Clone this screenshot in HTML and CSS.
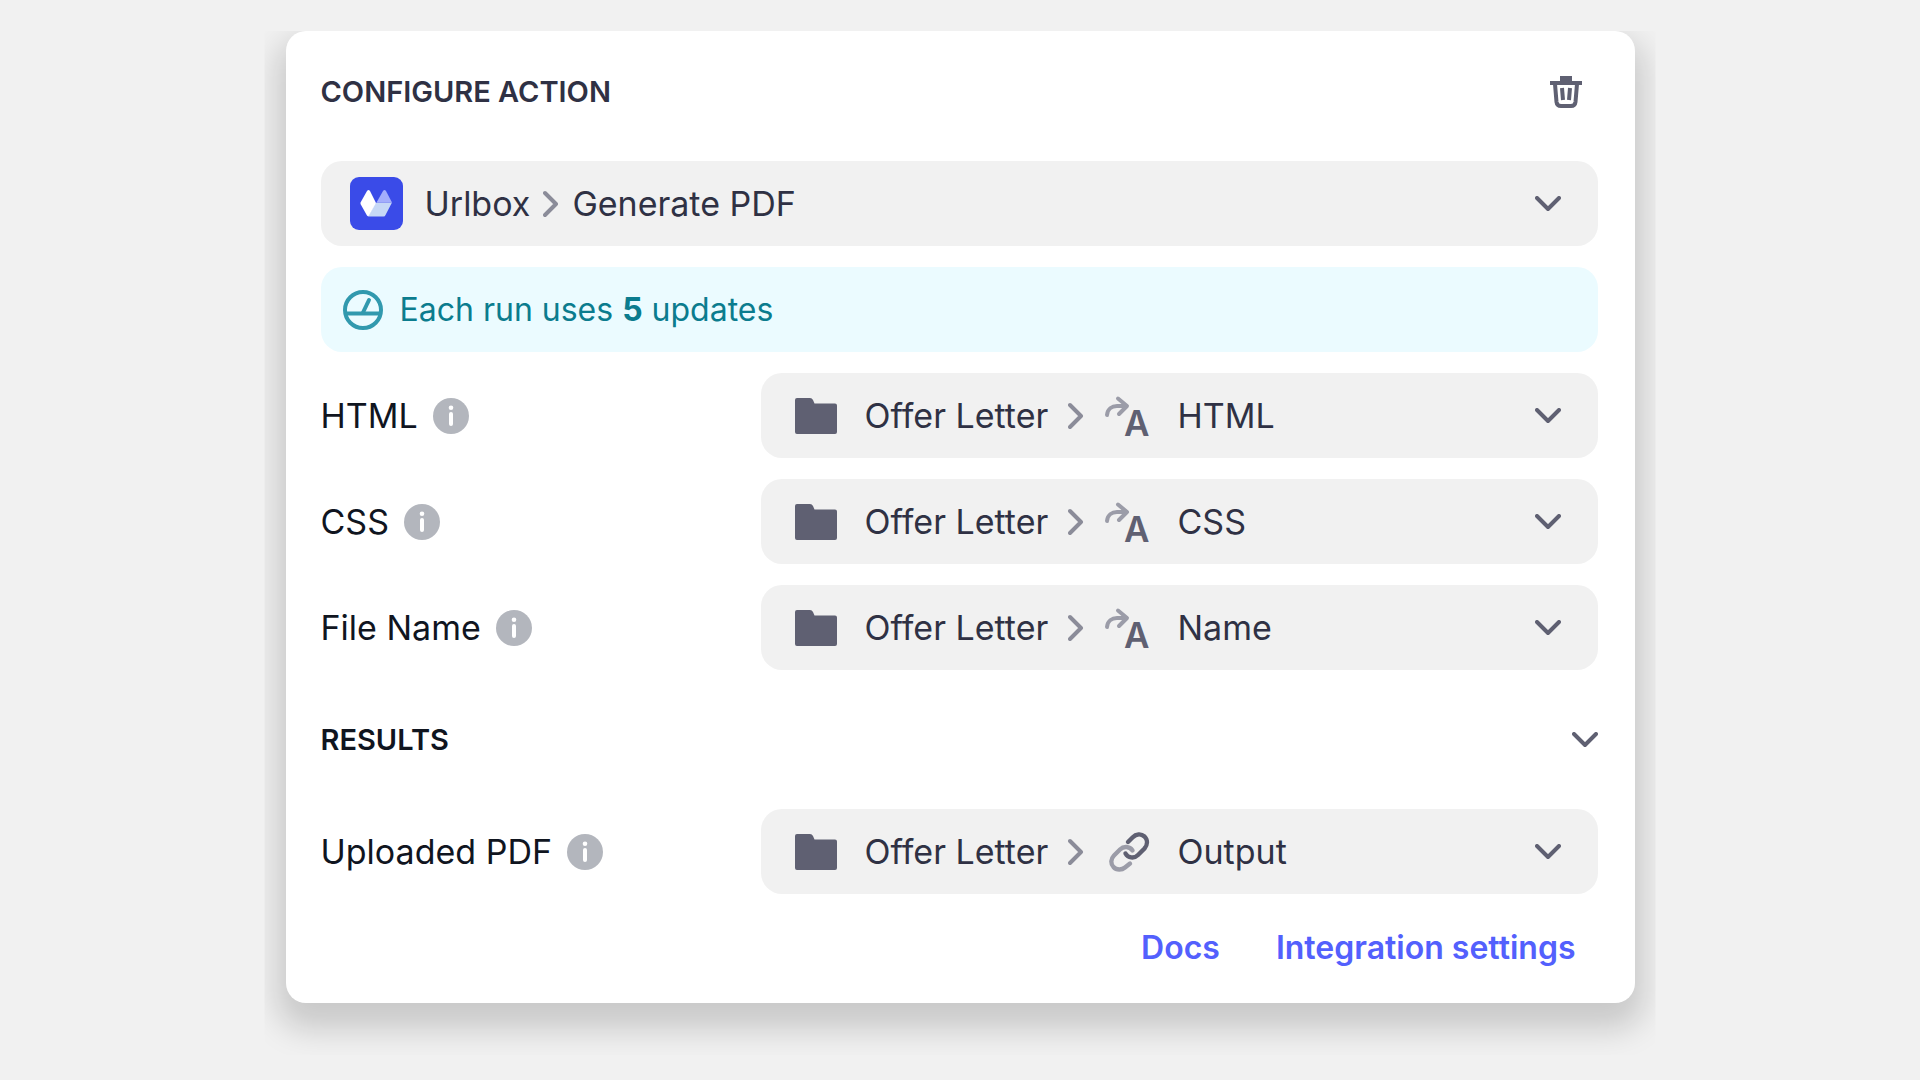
FILE: index.html
```html
<!DOCTYPE html>
<html lang="en">
<head>
<meta charset="utf-8">
<meta name="viewport" content="width=device-width, initial-scale=1">
<title>Configure action</title>
<link rel="stylesheet" href="styles.css">
</head>
<body>
<svg class="sprite" aria-hidden="true">
  <symbol id="caret" viewBox="0 0 26 16"><path d="M2 2 13 13 24 2" fill="none" stroke="currentColor" stroke-width="4" stroke-linecap="round" stroke-linejoin="round"/></symbol>
  <symbol id="crumb" viewBox="0 0 16 28"><path d="M2 3 13 14 2 25" fill="none" stroke="currentColor" stroke-width="4" stroke-linecap="round" stroke-linejoin="round"/></symbol>
  <symbol id="folder" viewBox="0 0 42 36"><path d="M2 0H15Q17 0 18 2L19.500 5.500H40Q42 5.500 42 7.500V34Q42 36 40 36H2Q0 36 0 34V2Q0 0 2 0Z" fill="currentColor"/></symbol>
  <symbol id="info" viewBox="0 0 36 36"><circle cx="18" cy="18" r="18" fill="currentColor"/><circle cx="18" cy="9.800" r="2.300" fill="#fff"/><path d="M18 16V26" stroke="#fff" stroke-width="4" stroke-linecap="round"/></symbol>
  <symbol id="arrow" viewBox="0 0 46 42"><g fill="none" stroke="#9b9ca8" stroke-width="4" stroke-linecap="round" stroke-linejoin="round"><path d="M3 20C3.500 14 8 11 13 11H22"/><path d="M14 3.500 23 11 15 19"/></g></symbol>
</svg>

<main class="card">
  <header class="card-header">
    <h1 class="title">CONFIGURE ACTION</h1>
    <button class="icon-button" type="button" aria-label="Delete action">
      <svg class="trash" viewBox="0 0 32 32" aria-hidden="true"><path d="M10 0H22V5H10ZM0 5H32V9H0Z" fill="#5f6072"/><path d="M5 8 6.500 26Q7 30 11 30H21Q25 30 25.500 26L27 8" fill="none" stroke="#5f6072" stroke-width="4"/><path d="M12 12 13 24M20 12 19 24" stroke="#5f6072" stroke-width="4"/></svg>
    </button>
  </header>

  <form class="form">
    <div class="field action">
      <svg class="logo" viewBox="0 0 53 53" aria-hidden="true"><rect width="53" height="53" rx="9" fill="#3a4be8"/><path d="M18 39.500 25 26.500 27 25.500H42L35.500 38Q35 39.500 33.500 39.500Z" fill="#c6d8f6"/><path d="M26.500 25.500 33 14Q34.500 12 36 14L42 25.500Z" fill="#a4aefc"/><path d="M10.500 25.500 17 14Q18.500 12 20 14L26 26 19 38.500Q18 40 17 38.500L10.500 27Z" fill="#fff"/></svg>
      <label class="source" for="action">Urlbox</label>
      <svg class="crumb" aria-hidden="true"><use href="#crumb"/></svg>
      <select class="select" id="action"><option>Generate PDF</option></select>
      <svg class="caret" aria-hidden="true"><use href="#caret"/></svg>
    </div>

    <p class="notice">
      <svg class="gauge" viewBox="0 0 40 40" aria-hidden="true"><g fill="none" stroke="#3199ae" stroke-width="4"><circle cx="20" cy="20" r="18"/><path d="M2 23.500H38"/><path d="M20 22.500 26 10" stroke-linecap="round"/></g></svg>
      <span>Each run uses <strong>5</strong> updates</span>
    </p>

    <div class="row">
      <div class="label"><label for="html">HTML</label><svg class="info" aria-hidden="true"><use href="#info"/></svg></div>
      <div class="field">
        <svg class="folder" aria-hidden="true"><use href="#folder"/></svg>
        <span class="source">Offer Letter</span>
        <svg class="crumb" aria-hidden="true"><use href="#crumb"/></svg>
        <svg class="type" viewBox="0 0 46 42" aria-hidden="true"><use href="#arrow"/><text class="type-letter" x="20" y="41">A</text></svg>
        <select class="select" id="html"><option>HTML</option></select>
        <svg class="caret" aria-hidden="true"><use href="#caret"/></svg>
      </div>
    </div>

    <div class="row">
      <div class="label"><label for="css">CSS</label><svg class="info" aria-hidden="true"><use href="#info"/></svg></div>
      <div class="field">
        <svg class="folder" aria-hidden="true"><use href="#folder"/></svg>
        <span class="source">Offer Letter</span>
        <svg class="crumb" aria-hidden="true"><use href="#crumb"/></svg>
        <svg class="type" viewBox="0 0 46 42" aria-hidden="true"><use href="#arrow"/><text class="type-letter" x="20" y="41">A</text></svg>
        <select class="select" id="css"><option>CSS</option></select>
        <svg class="caret" aria-hidden="true"><use href="#caret"/></svg>
      </div>
    </div>

    <div class="row">
      <div class="label"><label for="file-name">File Name</label><svg class="info" aria-hidden="true"><use href="#info"/></svg></div>
      <div class="field">
        <svg class="folder" aria-hidden="true"><use href="#folder"/></svg>
        <span class="source">Offer Letter</span>
        <svg class="crumb" aria-hidden="true"><use href="#crumb"/></svg>
        <svg class="type" viewBox="0 0 46 42" aria-hidden="true"><use href="#arrow"/><text class="type-letter" x="20" y="41">A</text></svg>
        <select class="select" id="file-name"><option>Name</option></select>
        <svg class="caret" aria-hidden="true"><use href="#caret"/></svg>
      </div>
    </div>

    <div class="results">
      <h2 class="title">RESULTS</h2>
      <button class="icon-button" type="button" aria-label="Collapse results" aria-expanded="true"><svg class="caret" aria-hidden="true"><use href="#caret"/></svg></button>
    </div>

    <div class="row">
      <div class="label"><label for="pdf">Uploaded PDF</label><svg class="info" aria-hidden="true"><use href="#info"/></svg></div>
      <div class="field">
        <svg class="folder" aria-hidden="true"><use href="#folder"/></svg>
        <span class="source">Offer Letter</span>
        <svg class="crumb" aria-hidden="true"><use href="#crumb"/></svg>
        <svg class="type" viewBox="-4 -1 44 42" aria-hidden="true"><g fill="none" stroke-width="4.400" stroke-linecap="round"><path d="M23.500 18.500C20.500 14 14.500 14 11 17.500L5 23.500C1.500 27 1.500 32 4.500 35C7.500 38.500 13 38 16 35.500L21 31.500" stroke="#9b9ca8"/><path d="M19 10 23.500 5.500C27 2 32 1.500 35.500 4.500C39 8 38.500 13 35.500 16.500L29 23C25 27 19 26 16.500 21.500" stroke="#5f6072"/></g></svg>
        <select class="select" id="pdf"><option>Output</option></select>
        <svg class="caret" aria-hidden="true"><use href="#caret"/></svg>
      </div>
    </div>
  </form>

  <footer class="links">
    <a href="#docs">Docs</a>
    <a href="#settings">Integration settings</a>
  </footer>
</main>
</body>
</html>
```
FILE: styles.css
```css
* { box-sizing: border-box; }

body {
  margin: 0;
  padding: 31px 24px 72px;
  background: #f1f1f1;
  color: #2f3144;
  font-family: Inter, "Liberation Sans", sans-serif;
  font-size: 34px;
  font-weight: 400;
  line-height: 44px;
}

.sprite { position: absolute; width: 0; height: 0; }
svg { display: block; flex: none; }

.card {
  max-width: 1349px;
  margin: 0 auto;
  padding: 0 37px 0 35px;
  border-radius: 20px;
  background: #fff;
  box-shadow: 0 17px 32px 9px rgb(0 0 0 / 17%);
  /* The shadow fades to the sides and below only. */
  clip-path: inset(0 -21px -52px -21px);
}

.card-header,
.results {
  display: flex;
  align-items: center;
  justify-content: space-between;
}
.card-header { height: 121px; margin-bottom: 9px; padding-right: 16px; }
.results { height: 97px; color: #10151f; }

.title { margin: 0; font-size: 29px; font-weight: 600; }
.icon-button { padding: 0; border: 0; background: none; color: #5f6072; cursor: pointer; }

.form { display: flex; flex-direction: column; gap: 21px; }

.row {
  display: grid;
  grid-template-columns: minmax(0, 440fr) minmax(0, 837fr);
  align-items: center;
}
.label { display: flex; align-items: center; gap: 15px; color: #10151f; }

.field,
.notice {
  display: flex;
  align-items: center;
  height: 85px;
  border-radius: 21px;
}
.field { padding: 0 37px 0 34px; background: #f1f1f1; }
.field.action { padding-left: 29px; }

.notice {
  margin: 0;
  padding: 0 22px;
  gap: 17px;
  background: #ebfbff;
  color: #0b7c8e;
  font-size: 32px;
}
.notice strong { font-weight: 700; }

.logo { width: 53px; height: 53px; margin-right: 22px; }
.gauge { width: 40px; height: 40px; }
.folder { width: 42px; height: 36px; margin-right: 28px; color: #5f6072; }
.crumb { width: 16px; height: 28px; margin: 0 13px; color: #8b8c99; }
.type { width: 46px; height: 42px; margin: 0 28px 0 7px; overflow: visible; }
.type-letter { font-size: 35px; font-weight: 600; fill: #5f6072; }
.caret { width: 26px; height: 16px; color: #5f6072; }
.info { width: 36px; height: 36px; color: #b3b6bd; }
.trash { width: 32px; height: 32px; }

.source { white-space: nowrap; }
.row .source { min-width: 190px; }
.select {
  flex: 1;
  min-width: 0;
  height: 44px;
  padding: 0;
  border: 0;
  appearance: none;
  background: none;
  color: inherit;
  font: inherit;
}

.links {
  display: flex;
  align-items: center;
  justify-content: flex-end;
  gap: 56px;
  height: 109px;
  padding: 0 22px 2px 0;
  font-size: 32px;
  font-weight: 600;
}
.links a { color: #5360fd; text-decoration: none; }
```
